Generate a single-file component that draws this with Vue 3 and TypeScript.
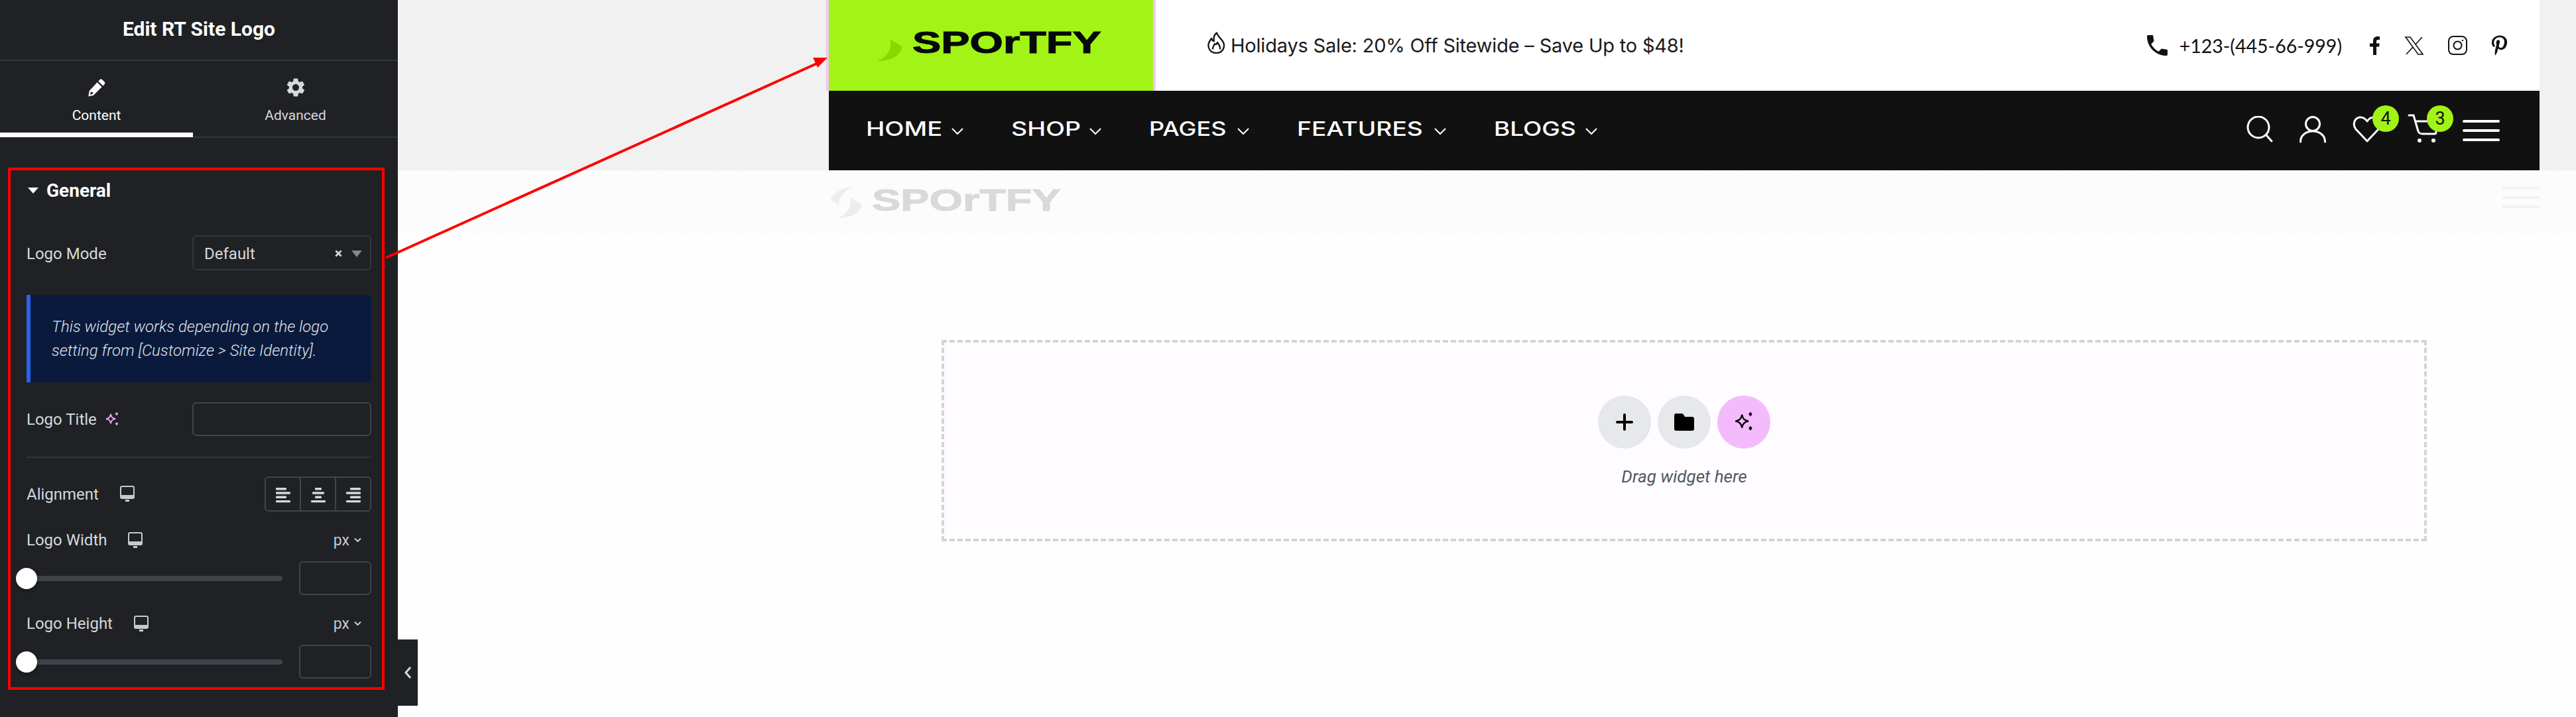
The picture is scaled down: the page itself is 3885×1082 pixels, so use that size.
<template>
  <div class="page">
    <!-- editor sidebar -->
    <aside class="panel">
      <div class="panel-title">Edit RT Site Logo</div>
      <div class="tabs">
        <div class="tab active">
          <svg class="tab-icon" viewBox="0 0 28 28" fill="#fff">
            <path d="M18.6 2.2a2.6 2.6 0 0 1 3.6 0l3.4 3.4a2.6 2.6 0 0 1 0 3.6l-2.4 2.4-7-7zM14.6 6.2l7 7L8.8 26 1.2 27.6 2.8 19zM5 20.4l-1 4.4 4.4-1-.6-2.6z" />
          </svg>
          <span>Content</span>
        </div>
        <div class="tab">
          <svg class="tab-icon" viewBox="2 2 20 20" fill="#d5d8dc">
            <path d="M19.14 12.94c.04-.3.06-.61.06-.94 0-.32-.02-.64-.07-.94l2.03-1.58c.18-.14.23-.41.12-.61l-1.92-3.32c-.12-.22-.37-.29-.59-.22l-2.39.96c-.5-.38-1.03-.7-1.62-.94l-.36-2.54c-.04-.24-.24-.41-.48-.41h-3.84c-.24 0-.43.17-.47.41l-.36 2.54c-.59.24-1.13.57-1.62.94l-2.39-.96c-.22-.08-.47 0-.59.22L2.74 8.87c-.12.21-.08.47.12.61l2.03 1.58c-.05.3-.09.63-.09.94s.02.64.07.94l-2.03 1.58c-.18.14-.23.41-.12.61l1.92 3.32c.12.22.37.29.59.22l2.39-.96c.5.38 1.03.7 1.62.94l.36 2.54c.05.24.24.41.48.41h3.84c.24 0 .44-.17.47-.41l.36-2.54c.59-.24 1.13-.56 1.62-.94l2.39.96c.22.08.47 0 .59-.22l1.92-3.32c.12-.22.07-.47-.12-.61l-2.01-1.58zM12 15.6c-1.98 0-3.6-1.62-3.6-3.6s1.62-3.6 3.6-3.6 3.6 1.62 3.6 3.6-1.62 3.6-3.6 3.6z" />
          </svg>
          <span>Advanced</span>
        </div>
      </div>

      <section class="general">
        <div class="section-head">
          <i class="caret"></i>
          <span>General</span>
        </div>

        <div class="field logo-mode">
          <label>Logo Mode</label>
          <div class="select">
            <span>Default</span>
            <svg class="clear" viewBox="0 0 12 12" stroke="#d5d8dc" stroke-width="3">
              <path d="M1.5 1.5l9 9M10.5 1.5l-9 9" />
            </svg>
            <i class="select-arrow"></i>
          </div>
        </div>

        <div class="notice">
          This widget works depending on the logo<br />setting from [Customize &gt; Site Identity].
        </div>

        <div class="field logo-title">
          <label>Logo Title</label>
          <svg class="spark" viewBox="0 0 24 24" fill="none" stroke="#e8a0f5" stroke-width="2">
            <path d="M10 4c.8 4.500 2.500 6.200 7 7-4.500.8-6.200 2.500-7 7-.8-4.500-2.500-6.200-7-7 4.500-.8 6.200-2.500 7-7z" />
            <path d="M19 1l2.500 2.500-2.500 2.500-2.500-2.500zM19 16l2.500 2.500-2.500 2.500-2.500-2.500z" fill="#e8a0f5" stroke="none" />
          </svg>
          <div class="input title-input"></div>
        </div>

        <div class="divider"></div>

        <div class="field alignment">
          <label>Alignment</label>
          <svg class="monitor" viewBox="0 0 22 25">
            <rect x="1" y="1" width="20" height="18" rx="2" fill="none" stroke="#c6cace" stroke-width="2" />
            <rect x="1" y="14" width="20" height="5" rx="1" fill="#c6cace" />
            <rect x="8" y="21" width="6" height="3" fill="#c6cace" />
          </svg>
          <div class="align-group">
            <div v-for="(rows, i) in alignIcons" :key="i" class="align-btn">
              <svg width="22" height="24" viewBox="0 0 22 24" fill="#d5d8dc">
                <rect
                  v-for="(r, j) in rows"
                  :key="j"
                  :x="r[0]"
                  :y="j * 6.300"
                  :width="r[1]"
                  height="3.400"
                  rx="1.200"
                />
              </svg>
            </div>
          </div>
        </div>

        <template v-for="s in sizeFields" :key="s">
          <div class="field size-head">
            <label>{{ s }}</label>
            <svg class="monitor" viewBox="0 0 22 25">
              <rect x="1" y="1" width="20" height="18" rx="2" fill="none" stroke="#c6cace" stroke-width="2" />
              <rect x="1" y="14" width="20" height="5" rx="1" fill="#c6cace" />
              <rect x="8" y="21" width="6" height="3" fill="#c6cace" />
            </svg>
            <div class="unit">
              <span>px</span>
              <svg width="11" height="8" viewBox="0 0 11 8" fill="none" stroke="#d5d8dc" stroke-width="1.800">
                <path d="M1 1.500l4.500 4.500L10 1.500" />
              </svg>
            </div>
          </div>
          <div class="field slider-row">
            <div class="slider">
              <div class="track"></div>
              <div class="thumb"></div>
            </div>
            <div class="input small-input"></div>
          </div>
        </template>
      </section>
    </aside>

    <button class="collapse">
      <svg width="14" height="22" viewBox="0 0 14 22" fill="none" stroke="#d5d8dc" stroke-width="3">
        <path d="M11 3l-7 8 7 8" />
      </svg>
    </button>

    <main class="stage">
      <!-- screenshot of the header -->
      <div class="top-strip">
        <div class="site-header">
          <div class="top-row">
            <div class="logo-cell">
              <svg class="swoosh" width="38" height="44" viewBox="0 0 38 44">
                <path d="M20 11l18 11c-1 14-15 22-38 22 14-4 25-17 20-33z" fill="#86d800" />
              </svg>
              <span class="wordmark">SPOrTFY</span>
            </div>
            <div class="promo">
              <svg class="flame" viewBox="0 0 27 33" fill="none" stroke="#1a1a1a" stroke-width="2.400" stroke-linejoin="round">
                <path d="M14 1.500c2 6.500 7 8.500 10 14.500 3 7-1 16-10.500 16S0 24 2 17c1-3 3-5 4-7 1 3 2 4 4 4-1-5 0-9.500 4-12.500z" />
                <path d="M8 26.500c-.5-3.500 2-6 3-8.500 1 2 3 1 4-2 2 3 5 6 4 10.500" />
              </svg>
              <span>Holidays Sale: 20% Off Sitewide – Save Up to $48!</span>
            </div>
            <div class="contact">
              <svg class="phone" viewBox="3 3 18 18" fill="#111">
                <path d="M6.620 10.790c1.440 2.830 3.760 5.140 6.590 6.590l2.200-2.200c.27-.27.67-.36 1.020-.24 1.120.37 2.330.57 3.570.57.55 0 1 .45 1 1V20c0 .55-.45 1-1 1-9.390 0-17-7.610-17-17 0-.55.45-1 1-1h3.500c.55 0 1 .45 1 1 0 1.250.2 2.450.57 3.570.11.35.03.74-.25 1.020l-2.200 2.200z" />
              </svg>
              <span class="phone-no">+123-(445-66-999)</span>
              <svg class="fb" viewBox="0 0 15 28" fill="#111">
                <path d="M10 28V15.500h4l.7-5H10V7.500c0-1.400.5-2.500 2.400-2.500H15V.4C14.500.3 13 .1 11.400.1 8 .1 5 2.300 5 6.700v3.800H0v5h5V28z" />
              </svg>
              <svg class="tw" viewBox="0 0 30 28" fill="none" stroke="#111" stroke-width="1.600">
                <path d="M2 1h7l19 26h-7zM27 1L16.500 12.500M3 27l10.500-11.500" />
              </svg>
              <svg class="ig" viewBox="0 0 29 29" fill="none" stroke="#111" stroke-width="2">
                <rect x="1" y="1" width="27" height="27" rx="7" />
                <circle cx="14.500" cy="14.500" r="6" />
                <circle cx="22" cy="7" r="1.200" fill="#111" stroke="none" />
              </svg>
              <svg class="pin" viewBox="0 0 384 512" fill="#111">
                <path d="M204 6.500C101.400 6.500 0 74.900 0 185.600 0 256 39.600 296 63.600 296c9.900 0 15.600-27.600 15.600-35.400 0-9.300-23.700-29.100-23.700-67.800 0-80.400 61.200-137.400 140.400-137.400 68.100 0 118.500 38.700 118.500 109.800 0 53.100-21.300 152.700-90.300 152.700-24.900 0-46.200-18-46.200-43.800 0-37.800 26.400-74.400 26.400-113.400 0-66.200-93.900-54.200-93.900 25.800 0 16.800 2.100 35.400 9.600 50.700-13.800 59.400-42 147.900-42 209.100 0 18.900 2.700 37.500 4.500 56.400 3.400 3.800 1.700 3.400 6.900 1.500 50.400-69 48.600-82.500 71.400-172.800 12.300 23.400 44.100 36 69.300 36 106.200 0 153.900-103.500 153.900-196.800C384 71.300 298.200 6.500 204 6.500z" />
              </svg>
            </div>
          </div>
          <nav class="nav">
            <div v-for="item in navItems" :key="item.label" class="nav-item">
              <span class="nav-label" :style="{ width: item.width + 'px' }">
                <span class="nav-text" :style="{ transform: `scaleX(${item.scale})` }">{{ item.label }}</span>
              </span>
              <svg class="nav-chevron" width="20" height="12" viewBox="0 0 20 12" fill="none" stroke="#fff" stroke-width="2">
                <path d="M2 2l8 8 8-8" />
              </svg>
            </div>
            <div class="nav-icons">
              <svg width="40" height="44" viewBox="0 0 40 44" fill="none" stroke="#fff" stroke-width="3" stroke-linecap="round">
                <circle cx="18" cy="17" r="16" />
                <path d="M30 29l8 9" />
              </svg>
              <svg width="40" height="44" viewBox="0 0 40 44" fill="none" stroke="#fff" stroke-width="3" stroke-linecap="round">
                <circle cx="20" cy="12" r="10.500" />
                <path d="M1.500 39C1.500 29 10 23 20 23s18.500 6 18.500 16" />
              </svg>
              <div class="icon-wrap">
                <svg width="44" height="44" viewBox="0 0 44 44" fill="none" stroke="#fff" stroke-width="3" stroke-linejoin="round">
                  <path d="M22 38L5 20C0 14 2 3 11 2c5-.5 9 3 11 6 2-3 6-6.500 11-6 9 1 11 12 6 18z" />
                </svg>
                <span class="badge heart-badge">4</span>
              </div>
              <div class="icon-wrap">
                <svg width="42" height="44" viewBox="0 0 42 44" fill="none" stroke="#fff" stroke-width="3" stroke-linecap="round" overflow="visible">
                  <path d="M1-1h7l7 24q1 4 7 4h18q2 0 2-3V8M11 8h31" />
                  <circle cx="17" cy="37" r="3" fill="#fff" stroke="none" />
                  <circle cx="38" cy="37" r="3" fill="#fff" stroke="none" />
                </svg>
                <span class="badge cart-badge">3</span>
              </div>
              <svg width="56" height="44" viewBox="0 0 56 44" stroke="#fff" stroke-width="4" stroke-linecap="round">
                <path d="M2 8h52M2 22h52M2 36h52" />
              </svg>
            </div>
          </nav>
        </div>
      </div>

      <!-- faded sticky header behind -->
      <div class="ghost-bar">
        <div class="ghost-logo">
          <svg width="48" height="50" viewBox="0 0 48 50">
            <path d="M35 1C22 3 6 9 1 21l13 10C10 20 22 8 35 1z" fill="#ededed" />
            <path d="M30 17l18 12c-2 13-18 20-37 20 13-5 23-17 19-32z" fill="#ededed" />
          </svg>
          <span class="wordmark ghost-mark">SPOrTFY</span>
        </div>
        <svg class="ghost-menu" width="56" height="34" viewBox="0 0 56 34" stroke="#f2f2f2" stroke-width="4">
          <path d="M0 3h56M0 17h56M0 31h56" />
        </svg>
      </div>

      <div class="dropzone">
        <div class="drop-buttons">
          <div class="round">
            <svg width="26" height="26" viewBox="0 0 26 26" stroke="#000" stroke-width="4" stroke-linecap="round">
              <path d="M13 2v22M2 13h22" />
            </svg>
          </div>
          <div class="round">
            <svg width="30" height="26" viewBox="0 0 30 26" fill="#000">
              <path d="M3 0h8q2 0 3 1.500L16 5h11q3 0 3 3v15q0 3-3 3H3q-3 0-3-3V3q0-3 3-3z" />
            </svg>
          </div>
          <div class="round ai">
            <svg width="34" height="34" viewBox="0 0 24 24" fill="none" stroke="#000" stroke-width="1.600">
              <path d="M10 4c.8 4.500 2.500 6.200 7 7-4.500.8-6.200 2.500-7 7-.8-4.500-2.500-6.200-7-7 4.500-.8 6.200-2.500 7-7z" />
              <path d="M19 1l2 2.500-2 2.500-2-2.500zM19 16l2 2.500-2 2.500-2-2.500z" fill="#000" stroke="none" />
            </svg>
          </div>
        </div>
        <div class="drop-text">Drag widget here</div>
      </div>
    </main>

    <!-- red annotation arrow -->
    <svg class="arrow" width="3885" height="1082" viewBox="0 0 3885 1082">
      <path d="M582 389L1236 94" stroke="#ff0000" stroke-width="4" fill="none" />
      <path d="M1248 87l-22 0 7 15z" fill="#ff0000" />
    </svg>
  </div>
</template>

<script setup lang="ts">
// the theme's menu font is very wide, Inter gets stretched to the same widths
const navItems = [
  { label: 'HOME', width: 116, scale: 1.27 },
  { label: 'SHOP', width: 105, scale: 1.25 },
  { label: 'PAGES', width: 120, scale: 1.2 },
  { label: 'FEATURES', width: 194, scale: 1.24 },
  { label: 'BLOGS', width: 125, scale: 1.23 }
]

const sizeFields = ['Logo Width', 'Logo Height']

// [x, width] of each bar
const alignIcons: number[][][] = [
  [[0, 16], [0, 22], [0, 16], [0, 22]],
  [[6, 10], [2, 18], [6, 10], [0, 22]],
  [[6, 16], [0, 22], [6, 16], [0, 22]]
]
</script>

<style>
html,
body {
  margin: 0;
  background: #fefefe;
  overflow: hidden;
}
</style>

<style scoped>
.page {
  position: relative;
  display: flex;
  width: 3885px;
  height: 1082px;
  overflow: hidden;
  font-family: Roboto, sans-serif;
  background: #fefefe;
}

.panel {
  width: 600px;
  height: 1082px;
  flex-shrink: 0;
  background: #1f2124;
  color: #d5d8dc;
}

.panel-title {
  height: 92px;
  box-sizing: border-box;
  border-bottom: 2px solid #33363b;
  display: flex;
  align-items: center;
  justify-content: center;
  padding-bottom: 4px;
  color: #fff;
  font-size: 30px;
  font-weight: 700;
}

.tabs {
  display: flex;
  height: 116px;
  border-bottom: 2px solid #33363b;
  box-sizing: border-box;
}

.tab {
  display: flex;
  flex-direction: column;
  align-items: center;
  box-sizing: border-box;
  padding-top: 26px;
  font-size: 21px;
  flex: 1;
  height: 115px;
  gap: 16px;
}

.tab.active {
  flex: 0 0 291px;
  color: #fff;
  border-bottom: 7px solid #fff;
}

.tab-icon {
  width: 28px;
  height: 28px;
}

.general {
  margin: 45px 0 0 12px;
  width: 568px;
  height: 788px;
  box-sizing: border-box;
  border: 4px solid #ff0000;
  padding: 10px 16px 0 24px;
}

.section-head {
  display: flex;
  align-items: center;
  gap: 12px;
  height: 40px;
  color: #fff;
  font-size: 28px;
  font-weight: 700;
}

.caret {
  margin-left: 2px;
  border-left: 8px solid transparent;
  border-right: 8px solid transparent;
  border-top: 9px solid #fff;
}

.field {
  display: flex;
  align-items: center;
  font-size: 24px;
}

.logo-mode {
  margin-top: 48px;
  height: 53px;
  justify-content: space-between;
}

.logo-mode label {
  padding-top: 2px;
}

.select {
  width: 270px;
  height: 53px;
  box-sizing: border-box;
  border: 2px solid #33363b;
  border-radius: 6px;
  padding: 2px 12px 0 16px;
  display: flex;
  align-items: center;
  color: #d5d8dc;
}

.clear {
  width: 11px;
  height: 11px;
  margin-left: auto;
}

.select-arrow {
  margin-left: 14px;
  border-left: 8px solid transparent;
  border-right: 8px solid transparent;
  border-top: 10px solid #85888c;
}

.notice {
  margin-top: 37px;
  height: 132px;
  box-sizing: border-box;
  background: #0a1a3d;
  border-left: 6px solid #2563eb;
  border-radius: 0 6px 6px 0;
  padding: 30px 20px 0 32px;
  font-size: 24px;
  font-style: italic;
  font-weight: 300;
  line-height: 36px;
  color: #e0e2e6;
  white-space: nowrap;
}

.logo-title {
  margin-top: 30px;
  height: 51px;
}

.spark {
  width: 24px;
  height: 24px;
  margin-left: 11px;
}

.input {
  height: 51px;
  box-sizing: border-box;
  border: 2px solid #3f444b;
  border-radius: 6px;
}

.title-input {
  width: 270px;
  margin-left: auto;
}

.divider {
  margin-top: 31px;
  height: 2px;
  background: #33363b;
}

.alignment {
  margin-top: 28px;
  height: 53px;
}

.monitor {
  width: 22px;
  height: 25px;
  margin-left: 32px;
}

.align-group {
  margin-left: auto;
  width: 161px;
  height: 53px;
  box-sizing: border-box;
  border: 2px solid #3f444b;
  border-radius: 6px;
  display: flex;
}

.align-btn {
  flex: 1;
  display: flex;
  align-items: center;
  justify-content: center;
  padding-top: 4px;
}

.align-btn + .align-btn {
  border-left: 2px solid #3f444b;
}

.size-head {
  margin-top: 23px;
  height: 40px;
}

.unit {
  margin-left: auto;
  display: flex;
  align-items: center;
  gap: 7px;
  padding-right: 15px;
  font-size: 23px;
  color: #c6cace;
}

.slider-row {
  margin-top: 12px;
  height: 51px;
}

.slider {
  position: relative;
  width: 386px;
}

.track {
  height: 8px;
  border-radius: 4px;
  background: #3f444b;
}

.thumb {
  position: absolute;
  left: -16px;
  top: -12px;
  width: 32px;
  height: 32px;
  border-radius: 50%;
  background: #fff;
  box-shadow: 0 2px 6px rgba(0, 0, 0, 0.4);
}

.small-input {
  width: 109px;
  margin-left: auto;
}

.collapse {
  position: absolute;
  left: 600px;
  top: 965px;
  width: 30px;
  height: 100px;
  padding: 0;
  border: none;
  background: #1f2124;
  display: flex;
  align-items: center;
  justify-content: center;
}

.stage {
  flex: 1;
  min-width: 0;
}

.top-strip {
  height: 257px;
  background: #f1f1f1;
  padding-left: 646px;
  box-sizing: border-box;
}

.site-header {
  width: 2584px;
}

.top-row {
  display: flex;
  height: 137px;
  background: #fff;
}

.logo-cell {
  width: 497px;
  box-sizing: border-box;
  background: #a2f316;
  border-left: 4px solid #f1c6f7;
  border-right: 4px solid #f1c6f7;
  padding: 48px 0 0 72px;
  display: flex;
  align-items: flex-start;
}

.swoosh {
  margin-right: 16px;
}

.wordmark {
  display: inline-block;
  font-family: "Liberation Sans", sans-serif;
  font-size: 46px;
  font-weight: 700;
  line-height: 33px;
  color: #05090a;
  -webkit-text-stroke: 1px currentColor;
  white-space: nowrap;
  transform: scaleX(1.41);
  transform-origin: left center;
}

.promo {
  display: flex;
  align-items: center;
  gap: 8px;
  padding-left: 78px;
  font-family: Inter, sans-serif;
  font-size: 29px;
  letter-spacing: -0.2px;
  color: #1a1a1a;
  white-space: nowrap;
}

.flame {
  width: 27px;
  height: 33px;
  margin-bottom: 8px;
}

.contact {
  margin-left: auto;
  padding-right: 48px;
  display: flex;
  align-items: center;
}

.phone {
  width: 31px;
  height: 31px;
}

.phone-no {
  margin-left: 18px;
  font-family: Lato, sans-serif;
  font-size: 28.500px;
  color: #111;
}

.fb {
  width: 15px;
  height: 28px;
  margin-left: 42px;
}

.tw {
  width: 30px;
  height: 28px;
  margin-left: 37px;
}

.ig {
  width: 29px;
  height: 29px;
  margin-left: 36px;
}

.pin {
  width: 25px;
  height: 31px;
  margin-left: 36px;
}

.nav {
  margin-left: 4px;
  height: 120px;
  background: #111;
  padding: 0 60px 0 56px;
  display: flex;
  align-items: center;
  gap: 71px;
}

.nav-item {
  display: flex;
  align-items: center;
  gap: 12px;
}

.nav-label {
  display: block;
  line-height: 30px;
}

.nav-text {
  display: inline-block;
  font-family: Inter, sans-serif;
  font-size: 30px;
  font-weight: 500;
  color: #fff;
  white-space: nowrap;
  transform-origin: left center;
}

.nav-chevron {
  margin-top: 2px;
}

.nav-icons {
  margin-left: auto;
  display: flex;
  align-items: center;
  gap: 40px;
}

.icon-wrap {
  position: relative;
  display: flex;
}

.badge {
  position: absolute;
  top: -16px;
  width: 40px;
  height: 40px;
  border-radius: 50%;
  background: #a2f316;
  color: #111;
  font-size: 27px;
  display: flex;
  align-items: center;
  justify-content: center;
}

.heart-badge {
  left: 30px;
}

.cart-badge {
  left: 28px;
}

.ghost-bar {
  height: 96px;
  box-sizing: border-box;
  padding: 23px 55px 0 652px;
  display: flex;
  align-items: flex-start;
  justify-content: space-between;
  background: repeating-linear-gradient(115deg, #fcfcfc 0 34px, #fafafa 34px 36px);
}

.ghost-logo {
  display: flex;
  align-items: flex-start;
}

.ghost-logo svg {
  display: block;
}

.ghost-mark {
  margin: 6px 0 0 15px;
  color: #d9d9d9;
}

.ghost-menu {
  display: block;
  margin-top: 1px;
}

.dropzone {
  margin: 160px 0 0 820px;
  width: 2240px;
  height: 304px;
  box-sizing: border-box;
  border: 4px dashed #d2d4d6;
  background: #fefcfe;
  display: flex;
  flex-direction: column;
  align-items: center;
  padding-top: 80px;
}

.drop-buttons {
  display: flex;
  gap: 10px;
}

.round {
  width: 80px;
  height: 80px;
  border-radius: 50%;
  background: #e6e8ea;
  display: flex;
  align-items: center;
  justify-content: center;
}

.round.ai {
  background: #f3bbfc;
}

.drop-text {
  margin-top: 27px;
  font-size: 26px;
  font-style: italic;
  color: #515962;
}

.arrow {
  position: absolute;
  left: 0;
  top: 0;
  pointer-events: none;
}
</style>
